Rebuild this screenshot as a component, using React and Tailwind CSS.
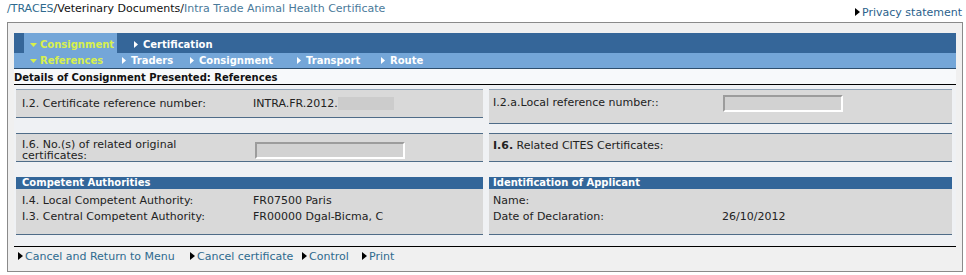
import React from "react";

const Tri = ({ color = "#000" }) => (
  <svg width="5" height="8" viewBox="0 0 5 8" className="inline-block mr-[2px] align-[0px]">
    <path d="M0 0 L5 4 L0 8 Z" fill={color} />
  </svg>
);
const NavTri = () => (
  <svg width="4" height="7" viewBox="0 0 4 7" className="inline-block mr-[5px]">
    <path d="M0 0 L4 3.5 L0 7 Z" fill="#fff" />
  </svg>
);
const TriDown = ({ color }) => (
  <svg width="7" height="4" viewBox="0 0 7 4" className="inline-block mr-[3px]">
    <path d="M0 0 L7 0 L3.5 4 Z" fill={color} />
  </svg>
);

const Input = ({ w = 150, className = "" }) => (
  <div
    className={"h-[17px] bg-[#d2d2d2] border-2 border-t-[#9c9c9c] border-l-[#9c9c9c] border-b-white border-r-white " + className}
    style={{ width: w }}
  />
);

export default function App() {
  return (
    <div
      className="w-[966px] h-[275px] bg-white text-[11px] leading-[14px] text-[#222]"
      style={{ fontFamily: '"DejaVu Sans", Verdana, sans-serif' }}
    >
      <div className="flex justify-between h-[22px] pl-[7px] pr-[4px] pt-[2px]">
        <div>
          <span className="text-[#2e6a8e]">/TRACES</span>
          <span className="text-[#111]">/Veterinary Documents/</span>
          <span className="text-[#4a7a9a]">Intra Trade Animal Health Certificate</span>
        </div>
        <div className="pt-[4px] text-[#2b5f8c]">
          <Tri />Privacy statement
        </div>
      </div>

      <div className="ml-[7px] w-[956px] h-[250px] border border-[#8a8a8a] bg-[#f0f0f0] px-[6px] pt-[10px]">
        {/* nav */}
        <div className="font-bold text-[10px]">
          <div className="flex h-[20px] bg-[#356699] pl-[10px]">
            <div className="w-[93px] bg-[#74a6d8] text-[#d8f04c] pl-[6px] flex items-center pt-[3px]">
              <TriDown color="#d8f04c" />Consignment
            </div>
            <div className="text-white flex items-center pl-[17px] pt-[3px]">
              <NavTri />Certification
            </div>
          </div>
          <div className="flex h-[16px] bg-[#74a6d8] border-b border-[#2d4e6e] pl-[16px] items-center">
            <div className="w-[92px] text-[#d8f04c] flex items-center">
              <TriDown color="#d8f04c" />References
            </div>
            <div className="w-[68px] text-white flex items-center">
              <NavTri />Traders
            </div>
            <div className="w-[107px] text-white flex items-center">
              <NavTri />Consignment
            </div>
            <div className="w-[84px] text-white flex items-center">
              <NavTri />Transport
            </div>
            <div className="text-white flex items-center">
              <NavTri />Route
            </div>
          </div>
        </div>

        <div className="bg-[#f7f9fb] h-[16px] font-bold text-[10px] text-[#111] pt-[2px] leading-[13px] border-b border-black">
          Details of Consignment Presented: References
        </div>

        <div className="bg-[#eff1f4] pl-[2px] pr-[4px] pt-[4px]">
          {/* row 1 */}
          <div className="flex gap-[6px] items-start">
            <div className="w-[467px] h-[29px] bg-[#d9d9d9] border-y border-t-[#8fa3b6] border-b-[#4f6c88] flex items-center px-[6px]">
              <div className="w-[231px]">I.2. Certificate reference number:</div>
              <div>INTRA.FR.2012.</div>
              <div className="w-[56px] h-[13px] bg-[#cccccc]" />
            </div>
            <div className="flex-1 h-[35px] bg-[#d9d9d9] border-y border-t-[#8fa3b6] border-b-[#4f6c88] flex items-start px-[4px] pt-[5px]">
              <div className="w-[230px] pt-[1px]">I.2.a.Local reference number::</div>
              <Input w={120} />
            </div>
          </div>
          {/* row 2 */}
          <div className="flex gap-[6px] mt-[9px]">
            <div className="w-[467px] h-[29px] bg-[#d9d9d9] border-y border-[#4f6c88] flex items-start px-[6px]">
              <div className="w-[233px] leading-[11px] pt-[5px]">
                <div className="w-[172px]">I.6. No.(s) of related original certificates:</div>
              </div>
              <Input w={150} className="mt-[8px]" />
            </div>
            <div className="flex-1 h-[29px] bg-[#d9d9d9] border-y border-[#4f6c88] flex items-start px-[4px] pt-[5px]">
              <div><span className="font-bold">I.6.</span> Related CITES Certificates:</div>
            </div>
          </div>
          {/* sections */}
          <div className="flex gap-[6px] mt-[15px]">
            <div className="w-[467px]">
              <div className="h-[12px] bg-[#336699] text-white font-bold text-[10px] px-[6px] leading-[12px]">Competent Authorities</div>
              <div className="h-[46px] bg-[#d9d9d9] border-b border-[#4f6c88] px-[6px] pt-[4px] leading-[16px]">
                <div className="flex"><div className="w-[231px]">I.4. Local Competent Authority:</div><div>FR07500 Paris</div></div>
                <div className="flex"><div className="w-[231px]">I.3. Central Competent Authority:</div><div>FR00000 Dgal-Bicma, C</div></div>
              </div>
            </div>
            <div className="flex-1">
              <div className="h-[12px] bg-[#336699] text-white font-bold text-[10px] px-[4px] leading-[12px]">Identification of Applicant</div>
              <div className="h-[46px] bg-[#d9d9d9] border-b border-[#4f6c88] px-[4px] pt-[4px] leading-[16px]">
                <div>Name:</div>
                <div className="flex"><div className="w-[229px]">Date of Declaration:</div><div>26/10/2012</div></div>
              </div>
            </div>
          </div>
          <div className="h-[11px]" />
        </div>
        <div className="border-t border-black pt-[3px] pl-[4px] flex text-[#2e6a8e]">
          <div className="w-[172px]"><Tri />Cancel and Return to Menu</div>
          <div className="w-[112px]"><Tri />Cancel certificate</div>
          <div className="w-[60px]"><Tri />Control</div>
          <div><Tri />Print</div>
        </div>
      </div>
    </div>
  );
}
